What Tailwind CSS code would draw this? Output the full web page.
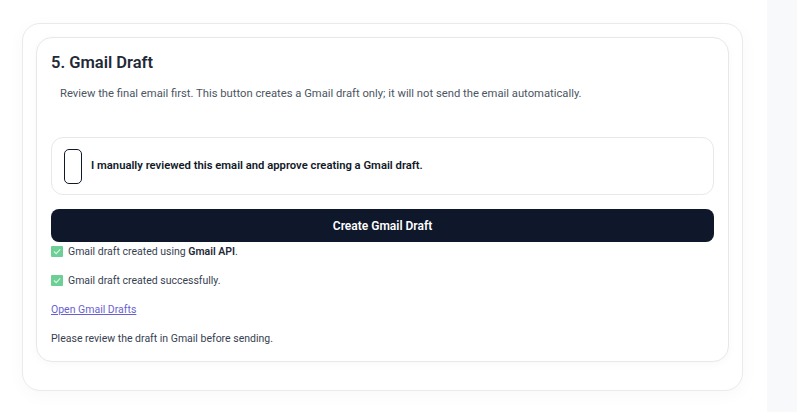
<!DOCTYPE html>
<html lang="en">
<head>
    <meta charset="UTF-8">
    <meta name="viewport" content="width=device-width, initial-scale=1.0">
    <title>Gmail Draft</title>
    <script src="https://cdn.jsdelivr.net/npm/@tailwindcss/browser@4"></script>
</head>
<body class="h-[412px] overflow-hidden bg-[#f8f9fb] font-['Roboto',sans-serif]">
    <div class="flex">
        <main class="w-[767px] h-[412px] bg-white overflow-hidden">
            <!-- bottom edge of the previous card -->
            <div class="ml-[22px] mr-[24px] h-0 shadow-[0_2px_10px_rgba(15,23,42,0.05)]"></div>

            <section class="ml-[22px] mr-[24px] mt-[23px] h-[368px] rounded-[18px] border border-[#e9eaee] bg-white p-[13px] shadow-[0_4px_18px_rgba(15,23,42,0.03)]">
                <div class="h-[325px] rounded-[16px] border border-[#e7e8ec] bg-white pl-[14px] pr-[14px] shadow-[0_2px_10px_rgba(15,23,42,0.03)]">
                    <h2 class="pt-[15px] text-[16.5px] leading-[20px] font-semibold text-[#1f2937]">5. Gmail Draft</h2>
                    <p class="mt-[13px] pl-[9px] text-[11.24px] leading-[16px] text-[#4b5563]">Review the final email first. This button creates a Gmail draft only; it will not send the email automatically.</p>

                    <label class="mt-[35px] flex h-[58px] items-center gap-[9px] rounded-[12px] border border-[#e7e8ec] pl-[12px]">
                        <span class="h-[35px] w-[18px] rounded-[5px] border border-[#111827] bg-white"></span>
                        <span class="text-[11.26px] font-semibold text-[#111827]">I manually reviewed this email and approve creating a Gmail draft.</span>
                    </label>

                    <button class="mt-[14px] block h-[33px] w-full rounded-[8px] bg-[#0f172a] text-[12px] font-semibold text-white">Create Gmail Draft</button>

                    <p class="mt-[2px] flex h-[16px] items-center gap-[5px] text-[10.5px] text-[#374151]">
                        <svg class="h-[11px] w-[12px] -translate-y-[1px]" viewBox="0 0 12 11"><rect width="12" height="11" rx="1" fill="#6dcf95"/><path d="M3 5.5l2.2 2.2L9.2 3.4" fill="none" stroke="#d5f2df" stroke-width="1.2"/></svg>
                        <span>Gmail draft created using <strong class="font-semibold text-[#1f2937]">Gmail API</strong>.</span>
                    </p>
                    <p class="mt-[13px] flex h-[16px] items-center gap-[5px] text-[10.5px] text-[#374151]">
                        <svg class="h-[11px] w-[12px] -translate-y-[1px]" viewBox="0 0 12 11"><rect width="12" height="11" rx="1" fill="#6dcf95"/><path d="M3 5.5l2.2 2.2L9.2 3.4" fill="none" stroke="#d5f2df" stroke-width="1.2"/></svg>
                        <span>Gmail draft created successfully.</span>
                    </p>
                    <p class="mt-[13px] h-[16px] text-[10.5px] leading-[16px]"><a href="#" class="text-[#6a5fd0] underline">Open Gmail Drafts</a></p>
                    <p class="mt-[13px] h-[16px] text-[10.5px] leading-[16px] text-[#374151]">Please review the draft in Gmail before sending.</p>
                </div>
            </section>
        </main>
        <aside class="flex-1"></aside>
    </div>
</body>
</html>
